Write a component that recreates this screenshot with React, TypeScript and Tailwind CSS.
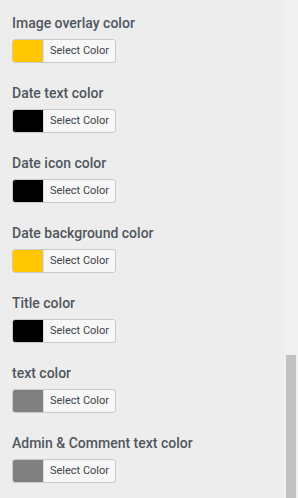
import React from 'react';

const fields = [
  { label: 'Image overlay color', color: '#ffc700' },
  { label: 'Date text color', color: '#000000' },
  { label: 'Date icon color', color: '#000000' },
  { label: 'Date background color', color: '#ffc700' },
  { label: 'Title color', color: '#000000' },
  { label: 'text color', color: '#808080' },
  { label: 'Admin & Comment text color', color: '#808080' },
];

export default function App() {
  return (
    <div className="flex h-[498px] w-[298px] overflow-hidden bg-[#ededed] font-['Roboto',sans-serif]">
      <div className="flex-1 pl-3 pt-[14px]">
        {fields.map((f) => (
          <div key={f.label} className="h-[70px]">
            <div className="text-[14px] font-medium leading-[18px] text-[#50575e]">{f.label}</div>
            <button className="mt-[7px] flex h-6 w-[104px] items-stretch overflow-hidden rounded-[3px] border border-[#c9c9c9] bg-[#f7f7f7]">
              <span className="w-[30px]" style={{ backgroundColor: f.color }} />
              <span className="flex flex-1 items-center justify-center border-l border-[#dcdcdc] text-[11px] text-[#3c434a]">
                Select Color
              </span>
            </button>
          </div>
        ))}
      </div>
      <div className="flex w-[14px] flex-col bg-[#f0f0f0] px-[2px] pt-[355px]">
        <div className="flex-1 bg-[#c1c1c1]" />
      </div>
    </div>
  );
}
